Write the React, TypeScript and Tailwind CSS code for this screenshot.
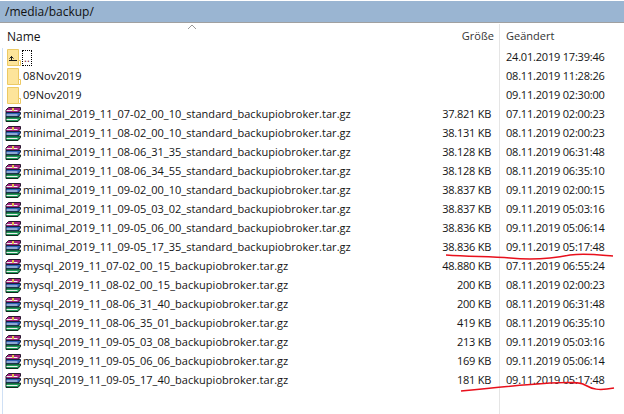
const folders = ["08Nov2019", "09Nov2019"];

const files = [
  ["minimal_2019_11_07-02_00_10_standard_backupiobroker.tar.gz", "37.821 KB", "07.11.2019 02:00:23"],
  ["minimal_2019_11_08-02_00_10_standard_backupiobroker.tar.gz", "38.131 KB", "08.11.2019 02:00:23"],
  ["minimal_2019_11_08-06_31_35_standard_backupiobroker.tar.gz", "38.128 KB", "08.11.2019 06:31:48"],
  ["minimal_2019_11_08-06_34_55_standard_backupiobroker.tar.gz", "38.128 KB", "08.11.2019 06:35:10"],
  ["minimal_2019_11_09-02_00_10_standard_backupiobroker.tar.gz", "38.837 KB", "09.11.2019 02:00:15"],
  ["minimal_2019_11_09-05_03_02_standard_backupiobroker.tar.gz", "38.837 KB", "09.11.2019 05:03:16"],
  ["minimal_2019_11_09-05_06_00_standard_backupiobroker.tar.gz", "38.836 KB", "09.11.2019 05:06:14"],
  ["minimal_2019_11_09-05_17_35_standard_backupiobroker.tar.gz", "38.836 KB", "09.11.2019 05:17:48"],
  ["mysql_2019_11_07-02_00_15_backupiobroker.tar.gz", "48.880 KB", "07.11.2019 06:55:24"],
  ["mysql_2019_11_08-02_00_15_backupiobroker.tar.gz", "200 KB", "08.11.2019 02:00:23"],
  ["mysql_2019_11_08-06_31_40_backupiobroker.tar.gz", "200 KB", "08.11.2019 06:31:48"],
  ["mysql_2019_11_08-06_35_01_backupiobroker.tar.gz", "419 KB", "08.11.2019 06:35:10"],
  ["mysql_2019_11_09-05_03_08_backupiobroker.tar.gz", "213 KB", "09.11.2019 05:03:16"],
  ["mysql_2019_11_09-05_06_06_backupiobroker.tar.gz", "169 KB", "09.11.2019 05:06:14"],
  ["mysql_2019_11_09-05_17_40_backupiobroker.tar.gz", "181 KB", "09.11.2019 05:17:48"],
];

function FolderIcon({ up }: { up?: boolean }) {
  return (
    <svg width="15" height="17" viewBox="0 0 15 17" className="ml-[2px] shrink-0">
      <path d="M0.5 0.5H11.5V16.5H0.5Z" fill="#fde49a" stroke="#ecc964" />
      <path d="M11.5 11.5H13.5V16.5H11.5Z" fill="#fff" stroke="#ecc964" />
      {up && (
        <g fill="none" stroke="#1c1c1c" strokeWidth="1">
          <path d="M2 11.5H10M4.5 11.5V7M2.5 9.5L4.5 7.5L6.5 9.5" />
        </g>
      )}
    </svg>
  );
}

function RarIcon() {
  return (
    <svg width="16" height="15" viewBox="0 0 16 15" className="shrink-0">
      <path d="M3.5 0.5H15.5V3L13 5.5H1V3Z" fill="#a3227f" stroke="#2a1830" />
      <path d="M1 5.5H15.5V7L13 10H1Z" fill="#2e62b8" stroke="#16203c" />
      <path d="M1 10H15.5V11.5L13 14.5H1Z" fill="#1f9a5a" stroke="#10291f" />
      <path d="M1.5 3.5H12.5M1.5 8H12.5M1.5 12.5H12.5" stroke="#ededed" />
      <path d="M7 1H9V4H7Z" fill="#e3c04f" />
    </svg>
  );
}

function Row({ icon, name, size, date, dotted }: { icon: React.ReactNode; name: string; size?: string; date: string; dotted?: boolean }) {
  return (
    <div className="flex h-[19px] items-center">
      <div className="flex w-[431px] items-center pl-[5px]">
        <div className="flex w-[18px] shrink-0 justify-start">{icon}</div>
        <span
          className={
            dotted
              ? "ml-[-1px] flex h-[16px] w-[10px] items-end justify-center border border-dotted border-black text-[#7a1020] leading-[14px]"
              : "whitespace-nowrap tracking-[0.04px]"
          }
        >
          {name}
        </span>
      </div>
      <div className="w-[60px] whitespace-nowrap text-right tracking-[-0.25px]">{size}</div>
      <div className="ml-[15px] whitespace-nowrap tracking-[-0.2px]">{date}</div>
    </div>
  );
}

export default function App() {
  return (
    <div className="relative h-[414px] w-[624px] overflow-hidden bg-white font-['Open_Sans',sans-serif] text-[11px] text-[#141414]">
      <div className="mt-px flex h-[21px] items-center bg-[#9ab5d2] pl-[5px] text-[12px] text-[#111]">/media/backup/</div>
      <div className="flex h-[26px] items-center border-t border-[#a0a0a0] pt-[2px]">
        <div className="w-[431px] pl-[7px] text-[12px]">Name</div>
        <div className="w-[63px] text-right text-[#333]">Größe</div>
        <div className="ml-[12px] text-[#333]">Geändert</div>
      </div>
      <Row icon={<FolderIcon up />} name=".." date="24.01.2019 17:39:46" dotted />
      {folders.map((f, i) => (
        <Row key={f} icon={<FolderIcon />} name={f} date={i == 0 ? "08.11.2019 11:28:26" : "09.11.2019 02:30:00"} />
      ))}
      {files.map((f) => (
        <Row key={f[0]} icon={<RarIcon />} name={f[0]} size={f[1]} date={f[2]} />
      ))}

      {/* column separators, sort arrow and the red marker lines lie over the list */}
      <div className="absolute bottom-0 left-[499px] top-[24px] w-px bg-[#e5e5e5]" />
      <div className="absolute bottom-0 left-[2px] top-[48px] w-px bg-[#cfe0f5]" />
      <svg className="absolute left-[187px] top-[24px]" width="10" height="6" viewBox="0 0 10 6">
        <path d="M1 5L5 1L9 5" fill="none" stroke="#9a9a9a" />
      </svg>
      <svg className="absolute left-0 top-0" width="624" height="414" viewBox="0 0 624 414" fill="none" stroke="#e8101c" strokeWidth="1.5">
        <path d="M446 255C470 257 490 256 510 258C530 260 550 259 570 255C585 253 600 255 613 256" />
        <path d="M461 391C490 388 520 385 550 383C570 382 580 382 585 385C592 389 598 391 614 388" />
      </svg>
    </div>
  );
}
